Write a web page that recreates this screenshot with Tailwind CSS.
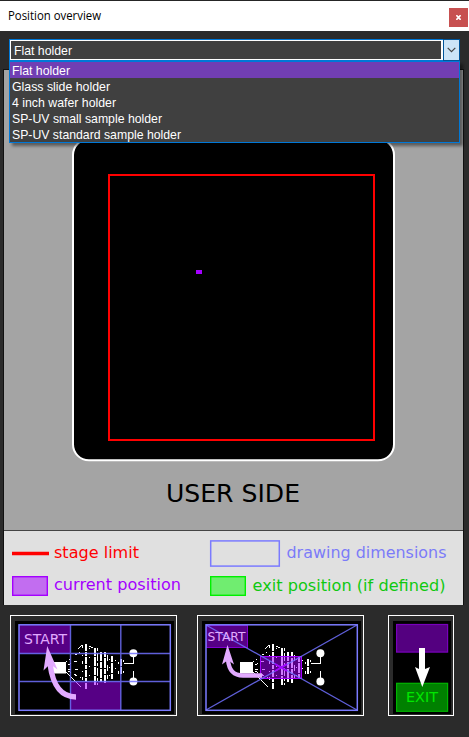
<!DOCTYPE html>
<html lang="en">
<head>
<meta charset="utf-8">
<title>Position overview</title>
<script src="https://cdn.jsdelivr.net/npm/@tailwindcss/browser@4"></script>
</head>
<body class="w-[469px] h-[737px] overflow-hidden bg-[#2b2b2b] flex flex-col font-['Liberation_Sans',sans-serif]">
<header class="h-[31px] shrink-0 bg-white border-t border-[#252525] flex items-center justify-between pl-2 pr-px">
  <h1 class="text-[12px] leading-4 text-black"><svg class="block" width="100" height="18"><text x="0" y="13" font-family="Open Sans, sans-serif" font-size="12.3" textLength="93" lengthAdjust="spacingAndGlyphs">Position overview</text></svg></h1>
  <button aria-label="Close" class="size-[19px] mt-[3px] bg-[#c75050] flex items-center justify-center"><svg width="5" height="5" viewBox="0 0 5 5" stroke="#fff" stroke-width="1.7"><path d="M.3 .2L4.7 4.8M4.7 .2L.3 4.8"/></svg></button>
</header>
<main class="relative flex flex-col pt-[38px]">
  <section class="mx-[3px] w-[461px] h-[536px] border border-[#111] flex flex-col shrink-0">
    <svg class="block shrink-0" width="459" height="460" viewBox="4 70 459 460">
      <rect x="4" y="70" width="459" height="460" fill="#a4a4a4"/>
      <rect x="73" y="139" width="321" height="321.3" rx="16" fill="#000" stroke="#fff" stroke-width="2"/>
      <rect x="109" y="175" width="265" height="265" fill="none" stroke="#f00" stroke-width="2"/>
      <rect x="196" y="270" width="6" height="4" fill="#a400ff"/>
      <text x="166" y="502" font-family="DejaVu Sans, sans-serif" font-size="24" textLength="134" lengthAdjust="spacingAndGlyphs">USER SIDE</text>
    </svg>
    <svg class="block shrink-0" width="459" height="75" viewBox="4 530 459 75" font-family="DejaVu Sans, sans-serif" font-size="16.5">
      <rect x="4" y="530" width="459" height="75" fill="#e0e0e0"/>
      <path d="M4 530.2H463" stroke="#444" stroke-width="1.6"/>
      <path d="M12 553.5H49" stroke="#f00" stroke-width="3.6"/>
      <text x="54" y="558" fill="#f00" textLength="85" lengthAdjust="spacingAndGlyphs">stage limit</text>
      <rect x="12.7" y="576.7" width="34.6" height="18.6" fill="#c26df0" stroke="#a400ff" stroke-width="1.4"/>
      <text x="54" y="590" fill="#a400ff" textLength="127" lengthAdjust="spacingAndGlyphs">current position</text>
      <rect x="210.7" y="540.9" width="68.6" height="25.2" fill="none" stroke="#7b7bff" stroke-width="1.5"/>
      <text x="286.5" y="558" fill="#7b7bf8" textLength="160" lengthAdjust="spacingAndGlyphs">drawing dimensions</text>
      <rect x="210.7" y="576.7" width="34.6" height="18.6" fill="#70ed70" stroke="#00f000" stroke-width="1.4"/>
      <text x="252.5" y="590.5" fill="#10c810" textLength="193" lengthAdjust="spacingAndGlyphs">exit position (if defined)</text>
    </svg>
  </section>
  <nav class="flex items-start pl-[10px] pt-[10px]">
    <button class="w-[167px] h-[101px] border border-white pl-[4px] pt-[4px] shrink-0 text-left">
      <svg class="block bg-black" width="159" height="93" viewBox="0 0 159 93">
        <defs>
          <g id="chip">
            <g stroke="#fff" fill="none" shape-rendering="crispEdges">
              <path d="M51 41L66 30" stroke-dasharray="1 3"/>
              <path d="M53 44L66 38M53 48H66M53 50L66 57" stroke-dasharray="3 4"/>
              <path d="M51 51L66 66"/>
              <path d="M63 28l4-4M74 25l4 2" />
              <path d="M67.5 24V64" stroke-dasharray="3 7 1 5"/>
              <path d="M71 23V68" stroke-width="2" stroke-dasharray="7 1 4 1"/>
              <path d="M74.5 27V60" stroke-dasharray="1 8"/>
              <path d="M80 27V65" stroke-width="2" stroke-dasharray="8 1 9 1"/>
              <path d="M82.5 27V64" stroke-dasharray="3 2 8 2"/>
              <path d="M86 31V61" stroke-width="2" stroke-dasharray="9 1 6 1"/>
              <path d="M90 31V62" stroke-width="2" stroke-dasharray="5 1 10 1"/>
              <path d="M92.5 34V58" stroke-dasharray="6 4"/>
              <path d="M97 35V58" stroke-width="2" stroke-dasharray="6 1 10 1"/>
              <path d="M94.5 38V57M100.5 39V55" stroke-dasharray="1 7"/>
              <path d="M106 38V54" stroke-width="2" stroke-dasharray="7 1"/>
              <path d="M103.5 41V43M103.5 50V53M108.5 39V41M108.5 50V52"/>
              <path d="M109 42.5H118.5V32M118.5 50V60"/>
            </g>
            <rect x="38" y="41" width="13" height="11.5" fill="#fff"/>
            <circle cx="118.4" cy="32.3" r="4" fill="#fff"/><circle cx="118.4" cy="60.4" r="4" fill="#fff"/>
          </g>
        </defs>
        <use href="#chip"/>
        <rect x="4" y="4" width="51" height="28.5" fill="#a400ff" fill-opacity=".52"/>
        <rect x="55.5" y="60.5" width="50" height="28.5" fill="#a400ff" fill-opacity=".52"/>
        <rect x="4" y="3.8" width="151.3" height="85.5" fill="none" stroke="#7b7bff" stroke-width="1.5"/>
        <path d="M55.5 4V89M105.8 4V89M4 32.5H155M4 60.5H155" stroke="#7070ff" stroke-opacity=".85" stroke-width="1.4"/>
        <text x="9" y="22.5" fill="#e2aaff" font-family="DejaVu Sans, sans-serif" font-size="14" textLength="43" lengthAdjust="spacingAndGlyphs">START</text>
        <path d="M61 76C46 76 38 65 35 43" fill="none" stroke="#e2aaff" stroke-width="5.4"/>
        <path d="M32.2 25L42.5 48.5L35 43L28.5 49.5Z" fill="#e2aaff"/>
      </svg>
    </button>
    <button class="w-[167px] h-[101px] ml-[20px] border border-white pl-[4px] pt-[4px] shrink-0 text-left">
      <svg class="block bg-black" width="159" height="93" viewBox="0 0 159 93">
        <use href="#chip"/>
        <rect x="4.5" y="4.5" width="41" height="22" fill="#a400ff" fill-opacity=".52" stroke="#8000d0"/>
        <rect x="58.5" y="35.5" width="41" height="22" fill="#a400ff" fill-opacity=".52" stroke="#a400ff"/>
        <path d="M4 4L155 89M155 4L4 89" stroke="#7070ff" stroke-opacity=".85" stroke-width="1.3"/>
        <rect x="4" y="3.8" width="151.3" height="85.5" fill="none" stroke="#7b7bff" stroke-width="1.5"/>
        <path d="M73 43L85 50M85 43L73 50" stroke="#a400ff" stroke-width="1.6"/>
        <text x="5.5" y="20" fill="#e2aaff" font-family="DejaVu Sans, sans-serif" font-size="12" textLength="38" lengthAdjust="spacingAndGlyphs">START</text>
        <path d="M60 54.5H41C31 54.5 27 49 26 39" fill="none" stroke="#e2aaff" stroke-width="4.3"/>
        <path d="M25.5 24L32 43.5L26 39L20 43.5Z" fill="#e2aaff"/>
      </svg>
    </button>
    <button class="w-[66px] h-[101px] ml-[24px] border border-white pl-[4px] pt-[4px] shrink-0 text-left">
      <svg class="block bg-black" width="58" height="93" viewBox="0 0 58 93">
        <rect x="3.6" y="3.5" width="51" height="27.6" fill="#540080" stroke="#7800bb" stroke-width="1.2"/>
        <rect x="3.6" y="62.3" width="51" height="28" fill="#008000" stroke="#00b400" stroke-width="1.2"/>
        <path d="M26 27H32V48L37 46L29.3 66L22 46L26 48Z" fill="#fff"/>
        <text x="13" y="81" fill="#00e800" font-family="DejaVu Sans, sans-serif" font-size="14" textLength="32" lengthAdjust="spacingAndGlyphs">EXIT</text>
      </svg>
    </button>
  </nav>
  <div class="absolute left-[9px] top-[8px] w-[451px] text-[13px] leading-4 text-white">
    <div class="h-[22px] border border-[#0078d7] flex">
      <div class="flex-1 border border-white border-r-2 bg-[#404040] pl-[3px] leading-[19px]"><svg class="block" width="80" height="18"><text x="0" y="14" fill="#fff" font-size="13" textLength="58" lengthAdjust="spacingAndGlyphs">Flat holder</text></svg></div>
      <div class="w-[17px] h-[22px] -mt-px -mr-px border border-[#005499] bg-[#cce4f7] flex items-center justify-center"><svg width="9" height="6" fill="none" stroke="#444" stroke-width="1.2"><path d="M.7 .8L4.5 4.6L8.3 .8"/></svg></div>
    </div>
    <ul class="h-[82px] border border-[#0078d7] bg-[#404040] shadow-[3px_3px_3px_rgba(0,0,0,0.45)]">
      <li class="h-[16px] bg-[#713eb3]"><svg class="block" width="200" height="16"><text x="2" y="13" fill="#fff" font-size="13" textLength="58" lengthAdjust="spacingAndGlyphs">Flat holder</text></svg></li>
      <li class="h-[16px]"><svg class="block" width="200" height="16"><text x="2" y="13" fill="#fff" font-size="13" textLength="98" lengthAdjust="spacingAndGlyphs">Glass slide holder</text></svg></li>
      <li class="h-[16px]"><svg class="block" width="200" height="16"><text x="2" y="13" fill="#fff" font-size="13" textLength="104" lengthAdjust="spacingAndGlyphs">4 inch wafer holder</text></svg></li>
      <li class="h-[16px]"><svg class="block" width="200" height="16"><text x="2" y="13" fill="#fff" font-size="13" textLength="150" lengthAdjust="spacingAndGlyphs">SP-UV small sample holder</text></svg></li>
      <li class="h-[16px]"><svg class="block" width="200" height="16"><text x="2" y="13" fill="#fff" font-size="13" textLength="169" lengthAdjust="spacingAndGlyphs">SP-UV standard sample holder</text></svg></li>
    </ul>
  </div>
</main>
</body>
</html>
